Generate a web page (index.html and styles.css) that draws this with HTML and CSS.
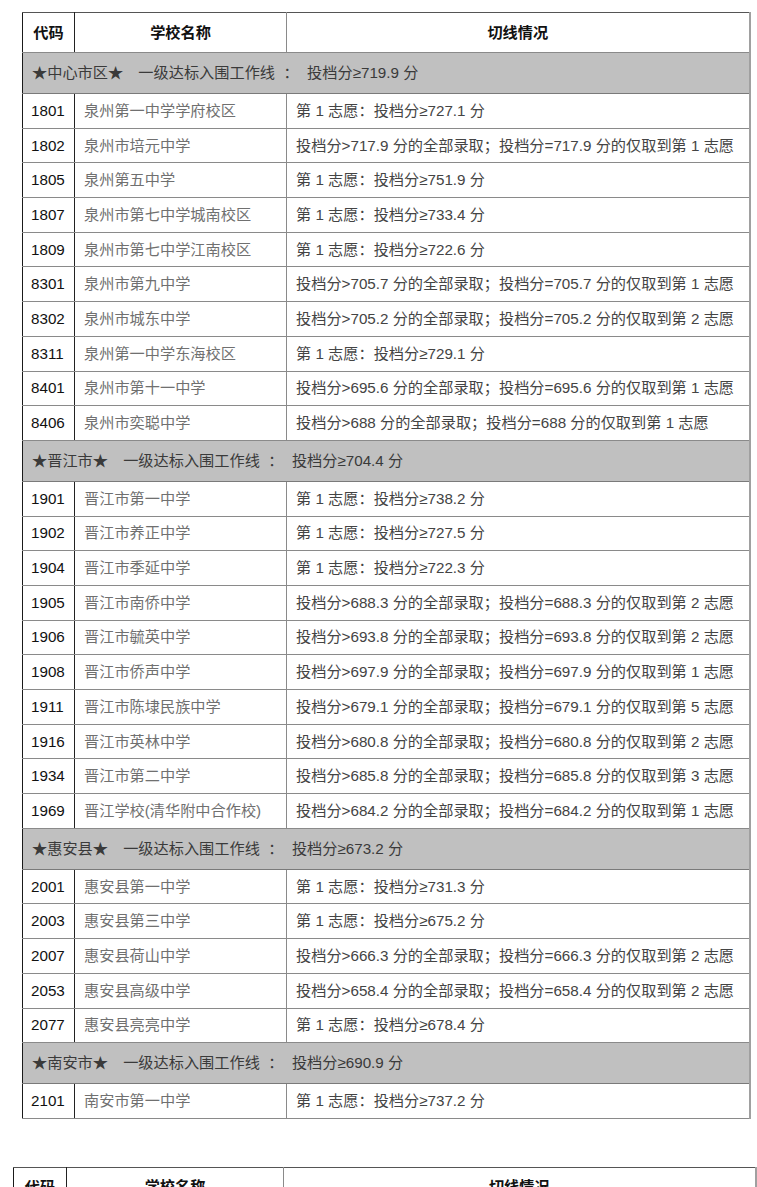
FILE: index.html
```html
<!DOCTYPE html>
<html lang="zh-CN">
<head>
<meta charset="utf-8">
<title>切线情况</title>
<link rel="stylesheet" href="styles.css">
</head>
<body>
<table class="grid">
  <colgroup><col class="c-code"><col class="c-name"><col class="c-line"></colgroup>
  <tr class="head"><th>代码</th><th>学校名称</th><th>切线情况</th></tr>
  <tr class="sec"><td colspan="3">★中心市区★　一级达标入围工作线&nbsp;&nbsp;：&nbsp;&nbsp;投档分≥719.9 分</td></tr>
  <tr class="row"><td>1801</td><td>泉州第一中学学府校区</td><td>第 1 志愿：投档分≥727.1 分</td></tr>
  <tr class="row"><td>1802</td><td>泉州市培元中学</td><td>投档分&gt;717.9 分的全部录取；投档分=717.9 分的仅取到第 1 志愿</td></tr>
  <tr class="row"><td>1805</td><td>泉州第五中学</td><td>第 1 志愿：投档分≥751.9 分</td></tr>
  <tr class="row"><td>1807</td><td>泉州市第七中学城南校区</td><td>第 1 志愿：投档分≥733.4 分</td></tr>
  <tr class="row"><td>1809</td><td>泉州市第七中学江南校区</td><td>第 1 志愿：投档分≥722.6 分</td></tr>
  <tr class="row"><td>8301</td><td>泉州市第九中学</td><td>投档分&gt;705.7 分的全部录取；投档分=705.7 分的仅取到第 1 志愿</td></tr>
  <tr class="row"><td>8302</td><td>泉州市城东中学</td><td>投档分&gt;705.2 分的全部录取；投档分=705.2 分的仅取到第 2 志愿</td></tr>
  <tr class="row"><td>8311</td><td>泉州第一中学东海校区</td><td>第 1 志愿：投档分≥729.1 分</td></tr>
  <tr class="row"><td>8401</td><td>泉州市第十一中学</td><td>投档分&gt;695.6 分的全部录取；投档分=695.6 分的仅取到第 1 志愿</td></tr>
  <tr class="row"><td>8406</td><td>泉州市奕聪中学</td><td>投档分&gt;688 分的全部录取；投档分=688 分的仅取到第 1 志愿</td></tr>
  <tr class="sec"><td colspan="3">★晋江市★　一级达标入围工作线&nbsp;&nbsp;：&nbsp;&nbsp;投档分≥704.4 分</td></tr>
  <tr class="row"><td>1901</td><td>晋江市第一中学</td><td>第 1 志愿：投档分≥738.2 分</td></tr>
  <tr class="row"><td>1902</td><td>晋江市养正中学</td><td>第 1 志愿：投档分≥727.5 分</td></tr>
  <tr class="row"><td>1904</td><td>晋江市季延中学</td><td>第 1 志愿：投档分≥722.3 分</td></tr>
  <tr class="row"><td>1905</td><td>晋江市南侨中学</td><td>投档分&gt;688.3 分的全部录取；投档分=688.3 分的仅取到第 2 志愿</td></tr>
  <tr class="row"><td>1906</td><td>晋江市毓英中学</td><td>投档分&gt;693.8 分的全部录取；投档分=693.8 分的仅取到第 2 志愿</td></tr>
  <tr class="row"><td>1908</td><td>晋江市侨声中学</td><td>投档分&gt;697.9 分的全部录取；投档分=697.9 分的仅取到第 1 志愿</td></tr>
  <tr class="row"><td>1911</td><td>晋江市陈埭民族中学</td><td>投档分&gt;679.1 分的全部录取；投档分=679.1 分的仅取到第 5 志愿</td></tr>
  <tr class="row"><td>1916</td><td>晋江市英林中学</td><td>投档分&gt;680.8 分的全部录取；投档分=680.8 分的仅取到第 2 志愿</td></tr>
  <tr class="row"><td>1934</td><td>晋江市第二中学</td><td>投档分&gt;685.8 分的全部录取；投档分=685.8 分的仅取到第 3 志愿</td></tr>
  <tr class="row"><td>1969</td><td>晋江学校(清华附中合作校)</td><td>投档分&gt;684.2 分的全部录取；投档分=684.2 分的仅取到第 1 志愿</td></tr>
  <tr class="sec"><td colspan="3">★惠安县★　一级达标入围工作线&nbsp;&nbsp;：&nbsp;&nbsp;投档分≥673.2 分</td></tr>
  <tr class="row"><td>2001</td><td>惠安县第一中学</td><td>第 1 志愿：投档分≥731.3 分</td></tr>
  <tr class="row"><td>2003</td><td>惠安县第三中学</td><td>第 1 志愿：投档分≥675.2 分</td></tr>
  <tr class="row"><td>2007</td><td>惠安县荷山中学</td><td>投档分&gt;666.3 分的全部录取；投档分=666.3 分的仅取到第 2 志愿</td></tr>
  <tr class="row"><td>2053</td><td>惠安县高级中学</td><td>投档分&gt;658.4 分的全部录取；投档分=658.4 分的仅取到第 2 志愿</td></tr>
  <tr class="row"><td>2077</td><td>惠安县亮亮中学</td><td>第 1 志愿：投档分≥678.4 分</td></tr>
  <tr class="sec"><td colspan="3">★南安市★　一级达标入围工作线&nbsp;&nbsp;：&nbsp;&nbsp;投档分≥690.9 分</td></tr>
  <tr class="row"><td>2101</td><td>南安市第一中学</td><td>第 1 志愿：投档分≥737.2 分</td></tr>
</table>

<table class="grid grid-next">
  <colgroup><col class="c-code2"><col class="c-name2"><col class="c-line2"></colgroup>
  <tr class="head"><th>代码</th><th>学校名称</th><th>切线情况</th></tr>
</table>
</body>
</html>
```

FILE: styles.css
```css
html {
  overflow: hidden;
  background: #fff;
}
body {
  margin: 0;
  font-family: "Liberation Sans", "Noto Sans CJK SC", sans-serif;
  font-size: 15.2px;
  line-height: 20px;
  color: #333;
}
.grid {
  border-collapse: collapse;
  table-layout: fixed;
  width: 727px;
  margin: 12px 0 0 22px;
}
.c-code { width: 52px; }
.c-name { width: 212px; }
.c-line { width: 463px; }

.grid td,
.grid th {
  border: 1px solid #8a8a8a;
  padding: 0 0 0 8px;
  white-space: nowrap;
  overflow: hidden;
  text-align: left;
}
.grid tr > :first-child {
  border-left-color: #1a1a1a;
  border-right-color: #222;
}
.grid tr > :last-child {
  border-right: 2px solid #a0a0a0;
}
.grid tr:first-child > * {
  border-top-color: #555;
}

.head th {
  height: 39px;
  font-weight: 700;
  color: #111;
  text-align: center;
  padding: 0;
}
.sec td {
  height: 40px;
  background: #c0c0c0;
  color: #3a3a3a;
  padding-left: 9px;
  border-color: #7a7a7a;
}
.row td {
  height: 33.7px;
}
.row td:first-child {
  color: #111;
}
.row td:nth-child(2) {
  color: #707070;
  padding-left: 9px;
}
.row td:nth-child(3) {
  color: #444;
  padding-left: 9px;
}

.grid-next {
  width: 742px;
  margin: 48px 0 0 13px;
}
.c-code2 { width: 53px; }
.c-name2 { width: 217px; }
.c-line2 { width: 472px; }
```
